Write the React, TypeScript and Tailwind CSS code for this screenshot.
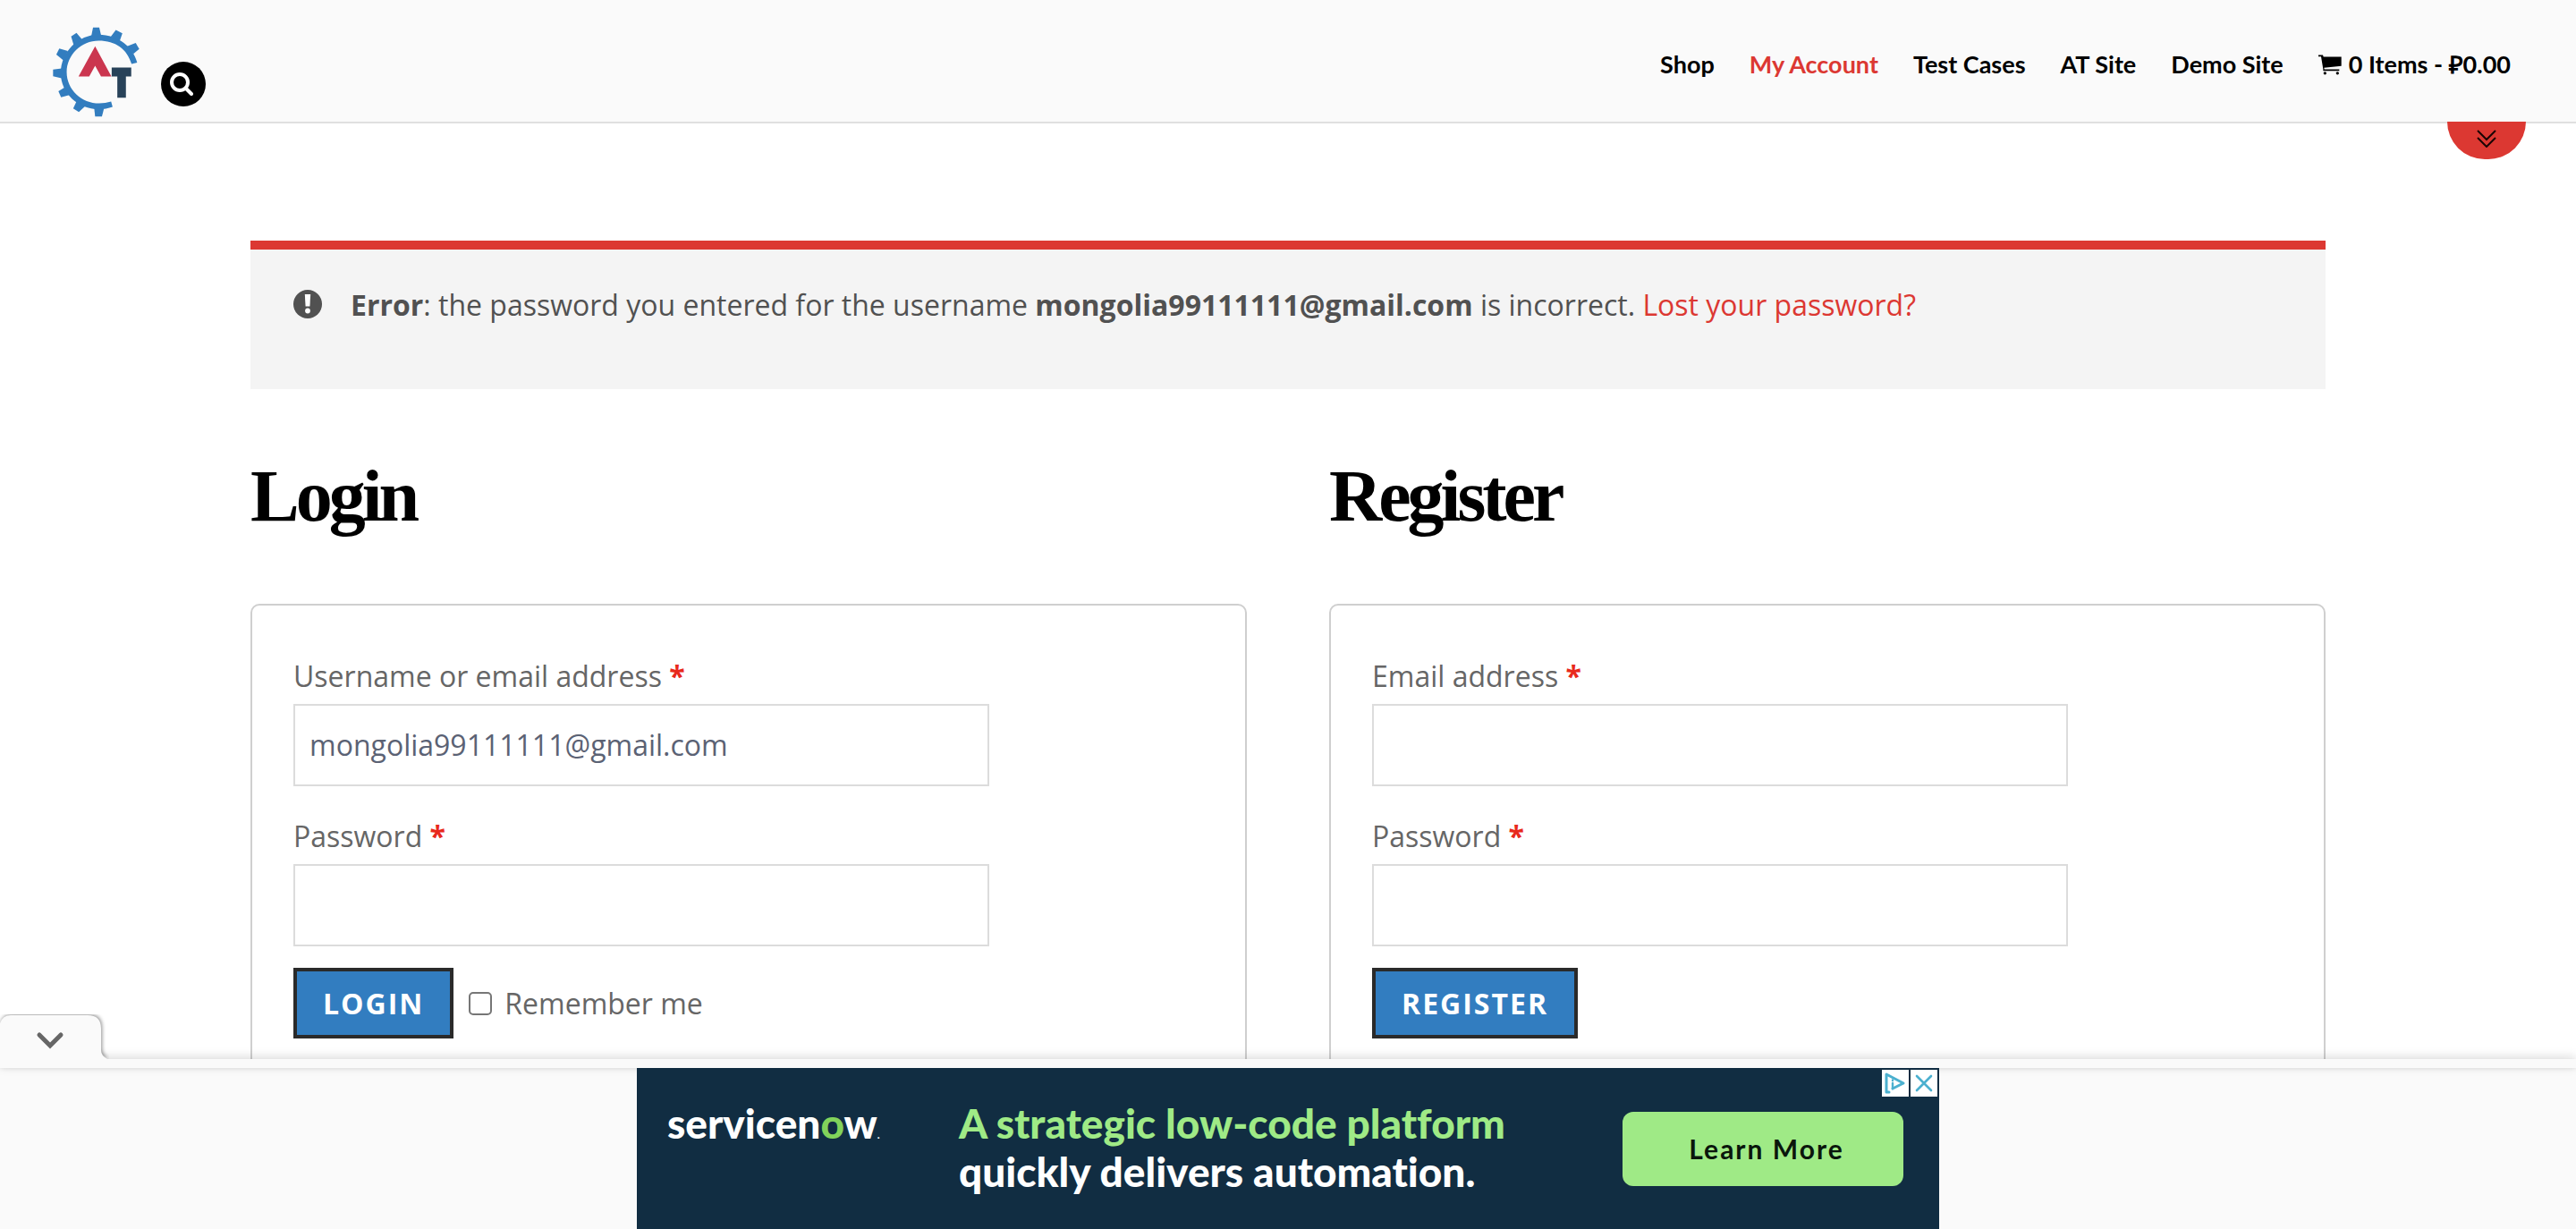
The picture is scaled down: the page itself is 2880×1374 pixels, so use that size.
import type { ReactNode } from 'react';

const navItems = [
  { label: 'Shop' },
  { label: 'My Account', active: true },
  { label: 'Test Cases' },
  { label: 'AT Site' },
  { label: 'Demo Site' },
];

function Logo() {
  return (
    <svg viewBox="176 92 293 302" className="h-[101px] w-[97px]" aria-hidden="true">
      <g fill="#327dbf">
        <path d="M442 216 L461 211 C448 160 398 117 331 117 C262 117 203 175 203 247 C203 315 262 369 331 369 C348 369 364 366 378 361 L373 343 C360 347 347 349 333 349 C273 349 223 303 223 243 C223 185 273 137 331 137 C388 137 427 165 442 216 Z" />
        <path d="M306 122 L312 93 H333 L340 122 Z" />
        <path d="M372 124 L389 101 L411 112 L402 139 Z" />
        <path d="M427 156 L456 145 L468 165 L448 182 Z" />
        <path d="M274 132 L256 111 L238 123 L247 153 Z" />
        <path d="M227 172 L198 164 L188 184 L212 204 Z" />
        <path d="M206 231 L177 235 V257 L206 264 Z" />
        <path d="M216 295 L195 308 L204 328 L232 321 Z" />
        <path d="M256 343 L245 366 L264 378 L286 358 Z" />
        <path d="M316 366 L319 393 H342 L349 366 Z" />
      </g>
      <path fill="#cb364f" d="M319 156 L374 258 H339 L319 222 L299 258 H263 Z" />
      <path fill="#284259" d="M375 228 H441 V258 H423 V330 H394 V258 H375 Z" />
    </svg>
  );
}

function Header() {
  return (
    <header className="flex h-[138px] items-start justify-between border-b-2 border-[#e0e0e0] bg-[#fafafa] pl-[59px] pr-[73px]">
      <div className="flex items-start gap-6 pt-[30px]">
        <a href="#home" aria-label="Automation practice site">
          <Logo />
        </a>
        <button type="button" aria-label="Search" className="mt-[39px] flex size-[50px] items-center justify-center rounded-full bg-black">
          <svg viewBox="0 0 26 26" className="mr-1 size-[26px]" fill="none" stroke="#fff" strokeWidth="4" aria-hidden="true">
            <circle cx="11" cy="11" r="9" />
            <path d="M18 18 L24 24" strokeLinecap="round" />
          </svg>
        </button>
      </div>
      <nav className="flex items-center gap-[39px] pt-[51px] font-[Lato,sans-serif] text-[27px] leading-[42px] font-bold text-black">
        {navItems.map((item) => (
          <a key={item.label} href="#nav" className={item.active ? 'text-[#dc3832]' : undefined}>
            {item.label}
          </a>
        ))}
        <a href="#cart" className="flex items-center gap-2">
          <svg viewBox="63 65 78 68" className="h-[23px] w-[26px]" aria-hidden="true">
            <path d="M63 66 H78 L80 72 H140 V103 L82 109 L83 114 H133 V119 H79 V113 L72 71 H63 Z" />
            <circle cx="85" cy="127" r="5" />
            <circle cx="127" cy="127" r="5" />
          </svg>
          <span>0 Items - ₽0.00</span>
        </a>
      </nav>
    </header>
  );
}

function Field({ id, label, type, value }: { id: string; label: string; type: string; value?: string }) {
  return (
    <div className="flex flex-col">
      <label htmlFor={id} className="leading-[63px] text-[#666]">
        {label} <span className="font-bold text-[#e8291c]">*</span>
      </label>
      <input
        id={id}
        type={type}
        defaultValue={value}
        className="h-[92px] w-full max-w-[778px] border-2 border-[#dcdcdc] bg-white px-4 pb-0.5 text-[#5b6274] outline-none"
      />
    </div>
  );
}

function SubmitButton({ children }: { children: ReactNode }) {
  return (
    <button type="submit" className="h-[79px] border-4 border-[#2a2a2a] bg-[#327dc0] px-[29px] font-bold tracking-[2px] text-white">
      {children}
    </button>
  );
}

function Panel({ title, children }: { title: string; children: ReactNode }) {
  return (
    <section className="flex-1">
      <h2 className="font-['Liberation_Serif',serif] text-[82px] leading-[100px] font-bold tracking-[-4px] text-black">{title}</h2>
      <form className="mt-[70px] flex min-h-[620px] flex-col gap-6 rounded-[10px] border-2 border-[#cfcfcf] px-[46px] pt-[47px]">
        {children}
      </form>
    </section>
  );
}

function AdBanner() {
  return (
    <div className="relative z-20 mx-auto flex h-[180px] w-[1456px] items-start bg-[#112d42]">
      <div className="w-[360px] pt-[35px] pl-[34px] font-[Lato,sans-serif] text-[46px] leading-[54px] font-black text-white">
        servicen<span className="text-[#81d35b]">o</span>w<span className="text-xs">.</span>
      </div>
      <p className="flex-1 pt-[35px] font-[Lato,sans-serif] text-[46px] leading-[54px] font-black text-white [font-variant-ligatures:none]">
        <span className="text-[#9fea86]">A strategic low-code platform</span>
        <br />
        quickly delivers automation.
      </p>
      <button type="button" className="mt-[49px] mr-10 h-[83px] w-[314px] rounded-xl bg-[#9fea86] pl-2 font-[Lato,sans-serif] text-[30px] font-bold tracking-[2px] text-[#0a160c]">
        Learn More
      </button>
      <div className="absolute top-0.5 right-0.5 flex gap-0.5">
        <button type="button" aria-label="Ad choices" className="size-[30px] bg-white">
          <svg viewBox="0 0 30 30" fill="none" stroke="#4bb0cf" strokeWidth="3" strokeLinecap="round" strokeLinejoin="round" aria-hidden="true">
            <path d="M8 25 L5 25 V5 L24 15 L12 21" />
            <path d="M12 15 V21 M12 11.5 V12" strokeWidth="2.4" />
          </svg>
        </button>
        <button type="button" aria-label="Close ad" className="size-[30px] bg-white">
          <svg viewBox="0 0 30 30" fill="none" stroke="#4bb0cf" strokeWidth="2.6" strokeLinecap="round" aria-hidden="true">
            <path d="M7 7 L23 23 M23 7 L7 23" />
          </svg>
        </button>
      </div>
    </div>
  );
}

export default function App() {
  return (
    <div className="h-screen overflow-hidden bg-white font-['Open_Sans',sans-serif] text-[32px]">
      <Header />
      <button type="button" aria-label="Show more" className="absolute top-[136px] right-14 flex h-[42px] w-[88px] justify-center rounded-b-[44px] bg-[#dc3832] pt-[9px]">
        <svg viewBox="0 0 22 20" className="h-5 w-[22px]" fill="none" stroke="#1a0504" strokeWidth="2" aria-hidden="true">
          <path d="M1 1 L11 11 L21 1 M1 9 L11 19 L21 9" />
        </svg>
      </button>

      <main className="mx-[280px] pt-[131px]">
        <div role="alert" className="flex h-[166px] items-start gap-8 border-t-[10px] border-[#dc3832] bg-[#f4f4f4] px-12 pt-10 text-[#515151]">
          <svg viewBox="0 0 32 32" className="mt-[5px] size-8" aria-hidden="true">
            <circle cx="16" cy="16" r="16" fill="#515151" />
            <path d="M12.8 5 H19.2 L18.4 18.5 H13.6 Z" fill="#fff" />
            <circle cx="16" cy="23.5" r="2.9" fill="#fff" />
          </svg>
          <p className="leading-[43px]">
            <strong>Error</strong>: the password you entered for the username <strong>mongolia99111111@gmail.com</strong> is incorrect.{' '}
            <a href="#lost" className="text-[#dc3832]">
              Lost your password?
            </a>
          </p>
        </div>

        <div className="mt-[70px] flex gap-[92px]">
          <Panel title="Login">
            <Field id="username" label="Username or email address" type="text" value="mongolia99111111@gmail.com" />
            <Field id="password" label="Password" type="password" />
            <div className="flex items-center gap-[17px]">
              <SubmitButton>LOGIN</SubmitButton>
              <label className="flex items-center gap-3.5 text-[#666]">
                <input type="checkbox" className="size-[26px] appearance-none rounded-[5px] border-2 border-[#767676] bg-white" />
                Remember me
              </label>
            </div>
          </Panel>
          <Panel title="Register">
            <Field id="reg-email" label="Email address" type="email" />
            <Field id="reg-password" label="Password" type="password" />
            <div>
              <SubmitButton>REGISTER</SubmitButton>
            </div>
          </Panel>
        </div>
      </main>

      <aside className="fixed inset-x-0 bottom-0">
        <div className="relative z-10 h-2.5 bg-[#fafafa] shadow-[0_-2px_12px_rgba(0,0,0,0.16),0_1px_4px_rgba(0,0,0,0.06)]" />
        <button type="button" aria-label="Collapse ad" className="absolute -top-[50px] left-0 z-10 h-[50px] w-[122px]">
          <svg viewBox="0 0 122 50" className="h-[50px] w-[122px]" aria-hidden="true">
            <path
              d="M0 10 Q3 1 12 1 H98 Q113 1 113 16 V40 Q113 46 120 50 H0 Z"
              fill="#fafafa"
              className="drop-shadow-[1px_-1px_2px_rgba(0,0,0,0.45)]"
            />
            <path d="M44 23 L56 35 L68 23" fill="none" stroke="#666" strokeWidth="5" strokeLinecap="round" />
          </svg>
        </button>
        <div className="bg-[#fafafa]">
          <AdBanner />
        </div>
      </aside>
    </div>
  );
}
